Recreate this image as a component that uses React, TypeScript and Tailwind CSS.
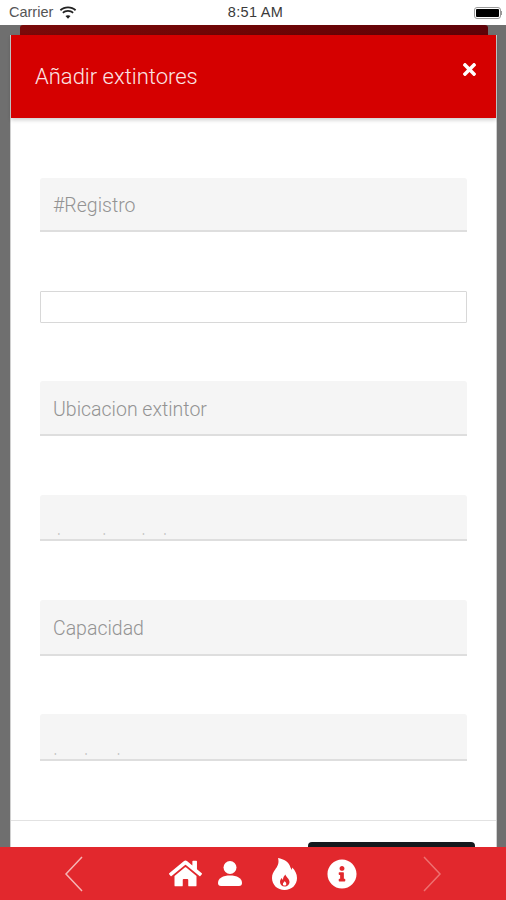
import { FaHome, FaInfoCircle, FaTimes } from "react-icons/fa";

function Field({ label, hidden, h }: { label: string; hidden?: boolean; h: string }) {
  return (
    <div className={`relative bg-[#f5f5f5] border-b-2 border-[#dedede] rounded-t-[3px] overflow-hidden ${h}`}>
      {hidden ? (
        <div className="absolute left-[13px] bottom-[4px] h-[2px] overflow-hidden text-[19.5px] leading-[14px] text-[#c4c4c4] font-light whitespace-nowrap">
          {label}
        </div>
      ) : (
        <div className="h-full flex items-center pl-[13px] pt-[4px] text-[19.5px] font-light text-[#939393]">{label}</div>
      )}
    </div>
  );
}

export default function App() {
  return (
    <div className="h-[900px] w-[506px] flex flex-col overflow-hidden bg-[#6f6f6f] font-['Roboto',sans-serif]">
      {/* status bar */}
      <div className="h-[25px] shrink-0 bg-white flex items-center justify-between pl-[9px] pr-[4px] text-[14.5px] text-[#3a3a3a] font-['Liberation_Sans',sans-serif]">
        <div className="flex items-center gap-[6px] w-[120px]">
          <span className="text-[#555]">Carrier</span>
          <svg width="18" height="13" viewBox="0 0 18 13" fill="#222">
            <path d="M9 2.2c2.7 0 5.2 1 7 2.8l1.2-1.4C15 1.5 12.200.4 9 .4S3 1.500.8 3.600L2 5c1.800-1.800 4.300-2.800 7-2.800z" />
            <path d="M9 5.800c1.700 0 3.300.7 4.500 1.800l1.200-1.400C13.200 4.800 11.200 4 9 4s-4.200.8-5.700 2.200l1.200 1.400C5.700 6.500 7.300 5.800 9 5.800z" />
            <path d="M9 9.200c-1 0-1.800.3-2.500.9L9 12.800l2.500-2.700c-.7-.6-1.500-.9-2.500-.9z" />
          </svg>
        </div>
        <span className="tracking-[0.3px]">8:51 AM</span>
        <div className="w-[120px] flex justify-end items-center">
          <div className="w-[27px] h-[12px] border border-[#999] rounded-[3px] p-[1px]">
            <div className="w-full h-full bg-black rounded-[1px]" />
          </div>
          <div className="w-[1px] h-[4px] bg-[#999]" />
        </div>
      </div>

      <div className="flex-1 min-h-0 overflow-hidden">
        {/* card behind the modal */}
        <div className="mx-[20px] w-[468px] h-[10px] rounded-t-[3px] bg-gradient-to-r from-[#7a0a0a] via-[#6e0505] to-[#5f0208]" />

        {/* modal */}
        <div className="ml-[10px] w-[487px] bg-white border-l border-r border-[#d0d0d0]">
          <div className="h-[83px] bg-[#d50000] flex justify-between pl-[24px] pr-[17px] shadow-[0_2px_4px_rgba(0,0,0,0.2)]">
            <h1 className="mt-[28px] text-[22px] leading-[27px] font-light text-[#fbe4e4]">Añadir extintores</h1>
            <FaTimes className="mt-[25px] text-white" size={19} />
          </div>

          <div className="pt-[60px] px-[29px] flex flex-col">
            <Field label="#Registro" h="h-[54px]" />
            <div className="mt-[59px] h-[32px] bg-white border border-[#d8d8d8] rounded-[1px]" />
            <div className="mt-[58px]">
              <Field label="Ubicacion extintor" h="h-[55px]" />
            </div>
            <div className="mt-[59px]">
              <Field label="Tipo de extintor" hidden h="h-[46px]" />
            </div>
            <div className="mt-[59px]">
              <Field label="Capacidad" h="h-[56px]" />
            </div>
            <div className="mt-[58px]">
              <Field label="Fecha de recarga" hidden h="h-[47px]" />
            </div>
          </div>

          <div className="mt-[59px] border-t border-[#e2e2e2] pt-[21px] pr-[21px] flex justify-end">
            <button className="w-[167px] h-[40px] bg-[#14191d] rounded-t-[4px]" aria-label="Guardar" />
          </div>
        </div>
      </div>

      {/* bottom nav */}
      <div className="h-[53px] shrink-0 bg-[#e2282d] flex items-center justify-between pl-[64px] pr-[64px]">
        <svg width="20" height="36" viewBox="0 0 20 36" fill="none" stroke="#f5b5b5" strokeWidth="1.500">
          <path d="M18 1 2 18l16 17" />
        </svg>
        <div className="flex items-center ml-[20px]">
          <FaHome className="text-white" size={33} />
          <svg className="ml-[16px]" width="24" height="26" viewBox="0 0 24 26" fill="#fff">
            <circle cx="12" cy="6.500" r="6.500" />
            <path d="M0 22c0-5 5-7.500 12-7.500S24 17 24 22c0 2-1 3-3 3H3c-2 0-3-1-3-3z" />
          </svg>
          <svg className="ml-[30px]" width="25" height="32" viewBox="0 0 25 32">
            <path
              fill="#fff"
              d="M6 0c6 1 11 4 12.500 9.500.6 1 .8 1.500 1 2.500.5-.7.7-1.500.7-2.500 3 3 4.800 6.500 4.800 10.500 0 7-5.500 12-12.500 12S0 27 0 20c0-3.500 1.200-6 3.200-8.500C5.500 8.500 7.500 5 6 0z"
            />
            <path
              fill="#e2282d"
              d="M13.500 16.500c.3 2.500 4 4 4 7.500 0 2.700-2.200 4.500-4.800 4.500S8 26.700 8 24c0-1.800.8-3 1.800-4 .2.800.6 1.500 1.200 1.900-.1-2 .8-3.900 2.500-5.400z"
            />
            <path fill="#fff" d="M12.800 23c.3 1 1.500 1.500 1.500 3 0 1-.7 1.600-1.700 1.600s-1.700-.6-1.700-1.600c0-1.400 1.500-1.800 1.900-3z" />
          </svg>
          <FaInfoCircle className="text-white ml-[30px]" size={30} />
        </div>
        <svg width="20" height="36" viewBox="0 0 20 36" fill="none" stroke="#ee7070" strokeWidth="1.500">
          <path d="m2 1 16 17L2 35" />
        </svg>
      </div>
    </div>
  );
}
